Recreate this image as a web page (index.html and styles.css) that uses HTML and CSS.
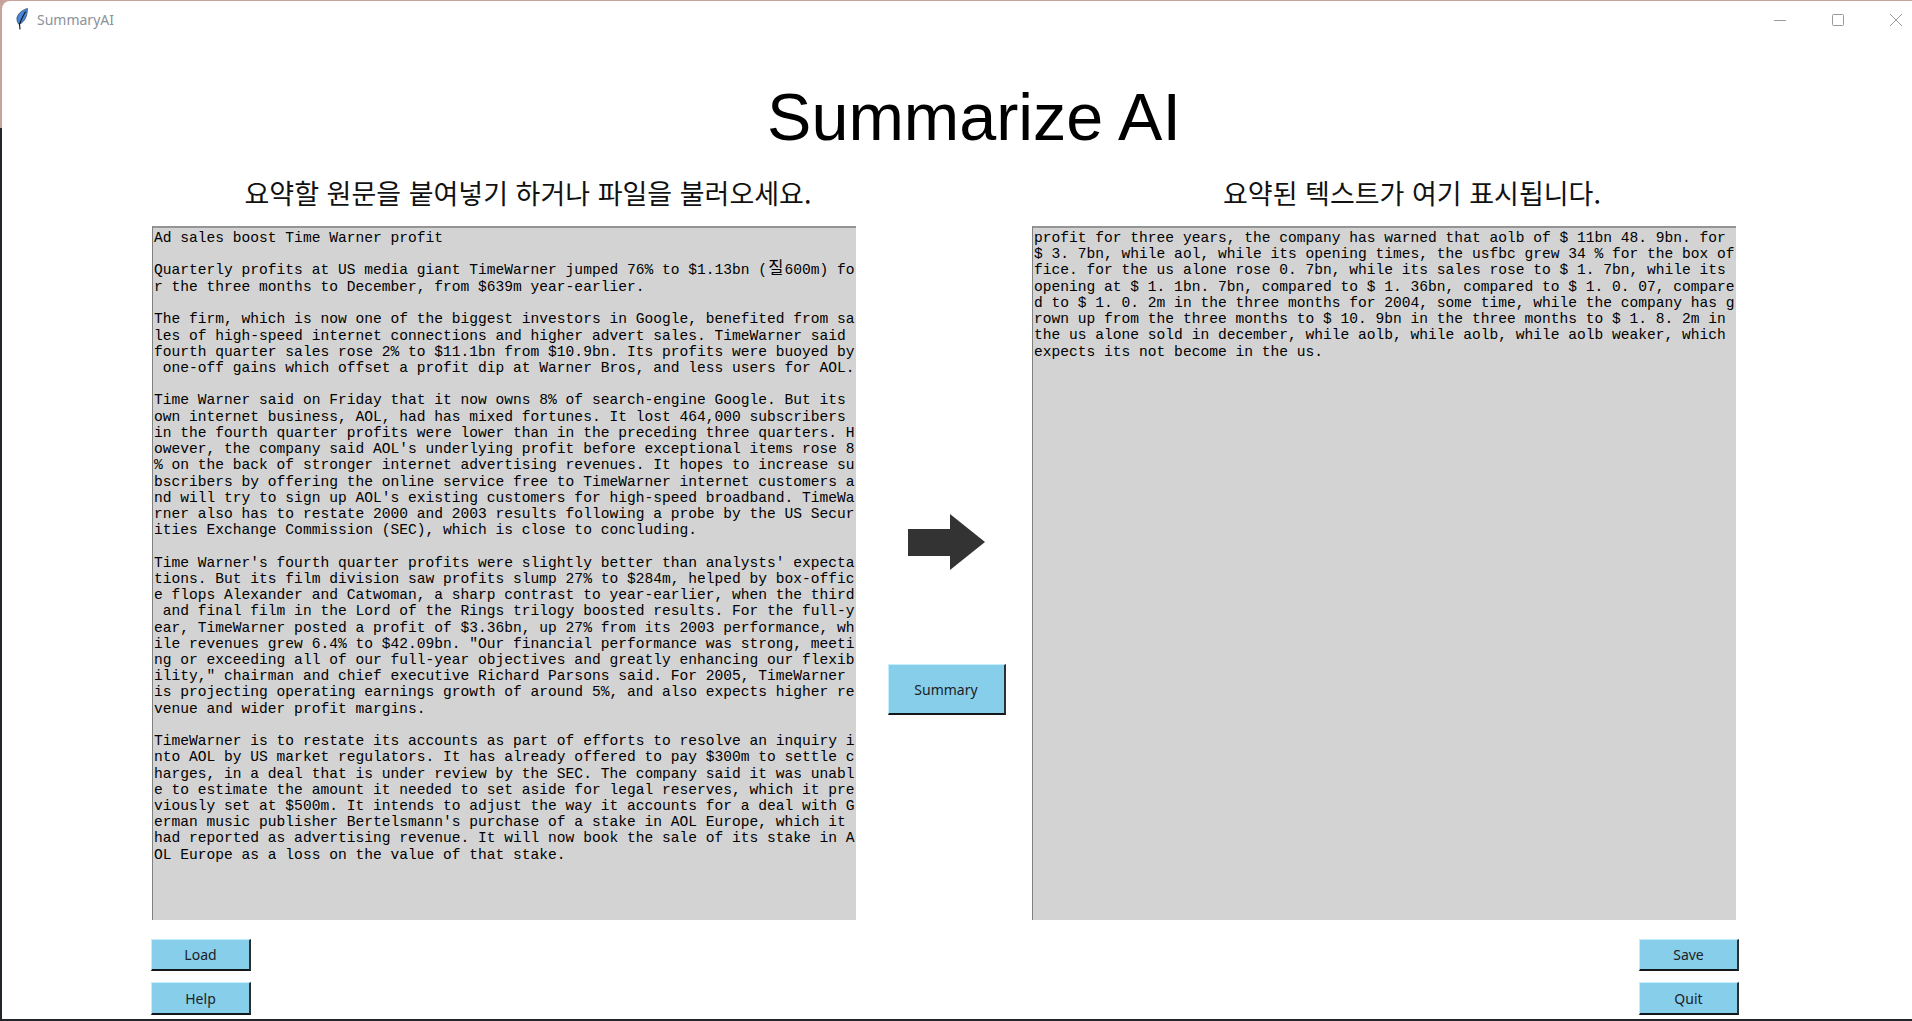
FILE: index.html
```html
<!DOCTYPE html>
<html lang="ko">
<head>
    <meta charset="UTF-8">
    <meta name="viewport" content="width=device-width, initial-scale=1.0">
    <title>SummaryAI</title>
    <link rel="stylesheet" href="styles.css">
</head>
<body>
<div class="window">
    <div class="titlebar">
        <svg class="feather" width="12" height="22" viewBox="0 0 12 22">
            <path d="M11.500 .5C7.500 1.500 2.500 4.500 1 9.500C.5 12 1.500 14.500 3 16.500C6.500 15 9.500 11.500 10.500 7.500C11 5 11.500 3 11.500 .5Z" fill="#4a86d8" stroke="#2a3f5c" stroke-width=".7"/>
            <path d="M9.500 3.500C7 8 5 12 3.500 16L4 21.500" fill="none" stroke="#10151c" stroke-width="1.100"/>
        </svg>
        <span class="app-name">SummaryAI</span>
        <div class="controls">
            <svg width="14" height="14" viewBox="0 0 14 14"><path d="M1 7.500H13" stroke="#9a9a9a" stroke-width="1"/></svg>
            <svg width="14" height="14" viewBox="0 0 14 14"><rect x="1.500" y="1.500" width="11" height="11" rx="1" fill="none" stroke="#9a9a9a" stroke-width="1"/></svg>
            <svg width="14" height="14" viewBox="0 0 14 14"><path d="M1 1L13 13M13 1L1 13" stroke="#9a9a9a" stroke-width="1"/></svg>
        </div>
    </div>

    <h1 class="main-title">Summarize AI</h1>

    <div class="workspace">
        <h2 class="panel-label">요약할 원문을 붙여넣기 하거나 파일을 불러오세요.</h2>
        <div></div>
        <h2 class="panel-label panel-label-right">요약된 텍스트가 여기 표시됩니다.</h2>

        <div class="textbox">Ad sales boost Time Warner profit

<div>Quarterly profits at US media giant TimeWarner jumped 76% to $1.13bn (<span class="wide">질</span>600m) fo</div>r the three months to December, from $639m year-earlier.

The firm, which is now one of the biggest investors in Google, benefited from sa
les of high-speed internet connections and higher advert sales. TimeWarner said
fourth quarter sales rose 2% to $11.1bn from $10.9bn. Its profits were buoyed by
 one-off gains which offset a profit dip at Warner Bros, and less users for AOL.

Time Warner said on Friday that it now owns 8% of search-engine Google. But its
own internet business, AOL, had has mixed fortunes. It lost 464,000 subscribers
in the fourth quarter profits were lower than in the preceding three quarters. H
owever, the company said AOL's underlying profit before exceptional items rose 8
% on the back of stronger internet advertising revenues. It hopes to increase su
bscribers by offering the online service free to TimeWarner internet customers a
nd will try to sign up AOL's existing customers for high-speed broadband. TimeWa
rner also has to restate 2000 and 2003 results following a probe by the US Secur
ities Exchange Commission (SEC), which is close to concluding.

Time Warner's fourth quarter profits were slightly better than analysts' expecta
tions. But its film division saw profits slump 27% to $284m, helped by box-offic
e flops Alexander and Catwoman, a sharp contrast to year-earlier, when the third
 and final film in the Lord of the Rings trilogy boosted results. For the full-y
ear, TimeWarner posted a profit of $3.36bn, up 27% from its 2003 performance, wh
ile revenues grew 6.4% to $42.09bn. "Our financial performance was strong, meeti
ng or exceeding all of our full-year objectives and greatly enhancing our flexib
ility," chairman and chief executive Richard Parsons said. For 2005, TimeWarner
is projecting operating earnings growth of around 5%, and also expects higher re
venue and wider profit margins.

TimeWarner is to restate its accounts as part of efforts to resolve an inquiry i
nto AOL by US market regulators. It has already offered to pay $300m to settle c
harges, in a deal that is under review by the SEC. The company said it was unabl
e to estimate the amount it needed to set aside for legal reserves, which it pre
viously set at $500m. It intends to adjust the way it accounts for a deal with G
erman music publisher Bertelsmann's purchase of a stake in AOL Europe, which it
had reported as advertising revenue. It will now book the sale of its stake in A
OL Europe as a loss on the value of that stake.</div>

        <div class="middle">
            <svg class="arrow" width="77" height="56" viewBox="0 0 77 56">
                <polygon points="0,15 42,15 42,0 77,28 42,56 42,42 0,42" fill="#333333"/>
            </svg>
            <button class="btn btn-summary">Summary</button>
        </div>

        <div class="textbox">profit for three years, the company has warned that aolb of $ 11bn 48. 9bn. for
$ 3. 7bn, while aol, while its opening times, the usfbc grew 34 % for the box of
fice. for the us alone rose 0. 7bn, while its sales rose to $ 1. 7bn, while its
opening at $ 1. 1bn. 7bn, compared to $ 1. 36bn, compared to $ 1. 0. 07, compare
d to $ 1. 0. 2m in the three months for 2004, some time, while the company has g
rown up from the three months to $ 10. 9bn in the three months to $ 1. 8. 2m in
the us alone sold in december, while aolb, while aolb, while aolb weaker, which
expects its not become in the us.</div>
    </div>

    <div class="footer">
        <button class="btn">Load</button>
        <button class="btn">Save</button>
        <button class="btn">Help</button>
        <button class="btn">Quit</button>
    </div>
</div>
</body>
</html>
```

FILE: styles.css
```css
html, body {
    margin: 0;
    padding: 0;
    height: 100%;
    overflow: hidden;
}

body {
    background: linear-gradient(#c7a39c 128px, #20262b 128px);
    font-family: "Noto Sans", sans-serif;
}

.window {
    box-sizing: border-box;
    height: 1018px;
    margin: 1px 0 2px 2px;
    background: #ffffff;
    border-top-left-radius: 8px;
}

.titlebar {
    display: flex;
    align-items: center;
    height: 38px;
    padding-left: 14px;
}

.feather {
    margin: -2px 9px 0 0;
}

.app-name {
    margin-top: -2px;
    font-size: 14px;
    color: #8b929a;
}

.controls {
    display: flex;
    gap: 44px;
    margin-left: auto;
    margin-right: 9px;
}

.main-title {
    margin: 0;
    padding: 28px 0 0 34px;
    height: 103px;
    font: 400 66.500px/100px "Liberation Sans", sans-serif;
    text-align: center;
    color: #000000;
}

.workspace {
    display: grid;
    grid-template-columns: 704px 176px 704px;
    margin-left: 150px;
}

.panel-label {
    margin: 3px 0 0;
    padding-left: 48px;
    height: 53px;
    font: 400 27px/40px "Noto Sans CJK KR", sans-serif;
    text-align: center;
    color: #111111;
}

.panel-label-right {
    padding-left: 56px;
}

.textbox {
    box-sizing: border-box;
    height: 694px;
    margin: 0;
    padding: 2px 0 0 1px;
    overflow: hidden;
    background: #d3d3d3;
    border-top: 2px solid #949494;
    border-left: 1px solid #808080;
    font: 14.600px/16.220px "Liberation Mono", "Noto Sans CJK KR", monospace;
    white-space: pre;
    color: #000000;
}

.wide {
    display: inline-block;
    width: 17.500px;
    font-size: 16.500px;
    line-height: 1;
    text-align: center;
}

.middle {
    display: flex;
    flex-direction: column;
    align-items: center;
    padding: 288px 0 0 5px;
}

.arrow {
    margin-bottom: 94px;
}

.btn {
    box-sizing: border-box;
    width: 100px;
    height: 100%;
    padding: 0;
    background: #87ceeb;
    border-style: solid;
    border-width: 1px 2px 2px 1px;
    border-color: #c4eefb #2a3238 #14181b #c4eefb;
    font-family: "Noto Sans", sans-serif;
    font-size: 14px;
    color: #1c2126;
}

.btn-summary {
    width: 118px;
    height: 51px;
}

.footer {
    display: grid;
    grid-template-columns: auto auto;
    grid-template-rows: 32px 33px;
    justify-content: space-between;
    row-gap: 11px;
    width: 1588px;
    margin: 19px 0 0 149px;
}
```
